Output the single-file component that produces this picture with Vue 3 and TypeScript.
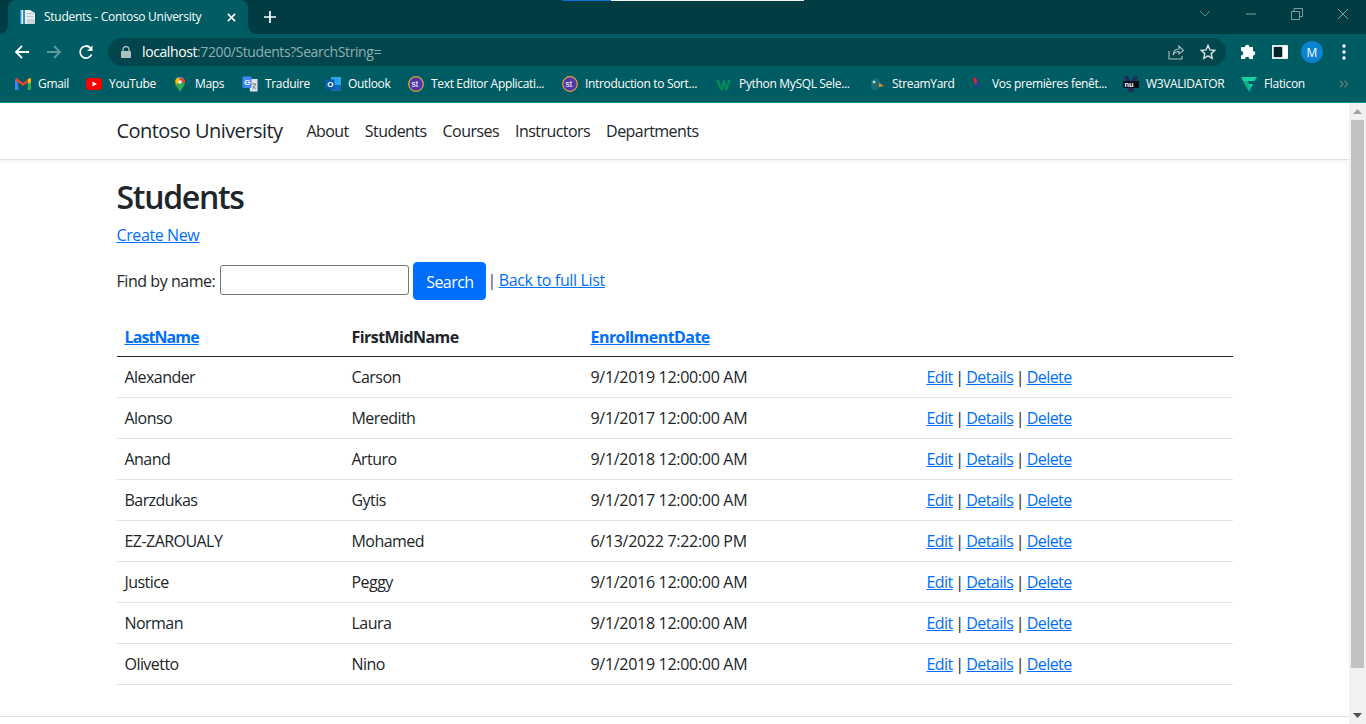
<script setup lang="ts">
interface Bookmark { label: string; icon: string; width: number }
interface Student { last: string; first: string; date: string }

const bookmarks: Bookmark[] = [
  { label: 'Gmail', icon: 'gmail', width: 71 },
  { label: 'YouTube', icon: 'youtube', width: 86 },
  { label: 'Maps', icon: 'maps', width: 70 },
  { label: 'Traduire', icon: 'translate', width: 83 },
  { label: 'Outlook', icon: 'outlook', width: 83 },
  { label: 'Text Editor Applicati...', icon: 'st', width: 154 },
  { label: 'Introduction to Sort...', icon: 'st', width: 154 },
  { label: 'Python MySQL Sele...', icon: 'w3', width: 153 },
  { label: 'StreamYard', icon: 'duck', width: 100 },
  { label: 'Vos premières fenêt...', icon: 'bird', width: 154 },
  { label: 'W3VALIDATOR', icon: 'nu', width: 118 },
  { label: 'Flaticon', icon: 'flaticon', width: 90 }
]

const navItems: string[] = ['About', 'Students', 'Courses', 'Instructors', 'Departments']

const students: Student[] = [
  { last: 'Alexander', first: 'Carson', date: '9/1/2019 12:00:00 AM' },
  { last: 'Alonso', first: 'Meredith', date: '9/1/2017 12:00:00 AM' },
  { last: 'Anand', first: 'Arturo', date: '9/1/2018 12:00:00 AM' },
  { last: 'Barzdukas', first: 'Gytis', date: '9/1/2017 12:00:00 AM' },
  { last: 'EZ-ZAROUALY', first: 'Mohamed', date: '6/13/2022 7:22:00 PM' },
  { last: 'Justice', first: 'Peggy', date: '9/1/2016 12:00:00 AM' },
  { last: 'Norman', first: 'Laura', date: '9/1/2018 12:00:00 AM' },
  { last: 'Olivetto', first: 'Nino', date: '9/1/2019 12:00:00 AM' }
]
</script>

<template>
  <div class="screen">
    <header class="chrome">
      <div class="progress"><span class="progress-blue"></span><span class="progress-white"></span></div>
      <div class="tabstrip">
        <div class="tab">
          <svg class="ico16" viewBox="0 0 16 16">
            <path d="M0 1h10l5 3v11H0z" fill="#e8eef2" />
            <rect x="0" y="1" width="5" height="14" fill="#2f8fd0" />
            <rect x="1.500" y="1" width="1.400" height="14" fill="#fff" />
            <rect x="6.500" y="4" width="7" height="1" fill="#b7c4cc" />
            <rect x="6.500" y="7" width="7" height="1" fill="#b7c4cc" />
            <rect x="7" y="10" width="8" height="5" fill="#c9d3da" />
          </svg>
          <span class="tab-title">Students - Contoso University</span>
          <svg class="tab-close" viewBox="0 0 10 10"><path d="M1 1l8 8M9 1l-8 8" stroke="#fff" stroke-width="1.700" /></svg>
        </div>
        <svg class="newtab" viewBox="0 0 12 12"><path d="M6 0v12M0 6h12" stroke="#fff" stroke-width="1.700" /></svg>
        <div class="winctl">
          <span class="winbtn"><svg width="12" height="8" viewBox="0 0 12 8"><path d="M1 1l5 5 5-5" fill="none" stroke="#5f8a8d" /></svg></span>
          <span class="winbtn"><svg width="12" height="2" viewBox="0 0 12 2"><path d="M1 1h10" stroke="#7a9ea0" /></svg></span>
          <span class="winbtn"><svg width="12" height="12" viewBox="0 0 12 12"><path d="M.5 3.500h8v8h-8zM3 3.500v-3h8.500v8h-3" fill="none" stroke="#7a9ea0" /></svg></span>
          <span class="winbtn"><svg width="12" height="12" viewBox="0 0 12 12"><path d="M1 1l10 10M11 1L1 11" stroke="#7a9ea0" /></svg></span>
        </div>
      </div>

      <div class="toolbar">
        <span class="tbtn"><svg class="ico16" viewBox="0 0 16 16"><path d="M15 8H2M8 2L2 8l6 6" fill="none" stroke="#fff" stroke-width="1.800" /></svg></span>
        <span class="tbtn"><svg class="ico16" viewBox="0 0 16 16"><path d="M1 8h13M8 2l6 6-6 6" fill="none" stroke="#5e9a9c" stroke-width="1.800" /></svg></span>
        <span class="tbtn"><svg class="ico16" viewBox="0 0 16 16"><path d="M13.600 10.500A6 6 0 1 1 12.400 3.800" fill="none" stroke="#fff" stroke-width="1.800" /><path d="M14.500 1.500v5.500H9z" fill="#fff" /></svg></span>
        <div class="omnibox">
          <svg class="lock" viewBox="0 0 10 12"><path d="M2 5V3.500a3 3 0 0 1 6 0V5" fill="none" stroke="#a9c0c1" stroke-width="1.300" /><rect y="5" width="10" height="7" rx="1" fill="#a9c0c1" /></svg>
          <span class="url"><span class="url-host">localhost</span>:7200/Students?SearchString=</span>
          <svg class="omni-ico" viewBox="0 0 16 16"><path d="M1 7v8h13v-3" fill="none" stroke="#a9c0c1" stroke-width="1.100" /><path d="M5 11c.5-4 3-6 6-6V2l4.500 4.500L11 10V7.500C8.500 7.500 6.500 8.500 5 11z" fill="none" stroke="#a9c0c1" stroke-width="1.100" /></svg>
          <svg class="omni-ico star" viewBox="0 0 16 16"><path d="M8 1.500l2 4.400 4.800.5-3.600 3.200 1 4.700L8 11.900l-4.200 2.400 1-4.700L1.200 6.400 6 5.900z" fill="none" stroke="#d3e0e0" stroke-width="1.500" /></svg>
        </div>
        <span class="tbtn tbtn-first"><svg class="ico16" viewBox="0 0 16 16"><path d="M1 4h4a2.200 2.200 0 1 1 4.400 0H13v4a2.200 2.200 0 1 1 0 4.400V16H9.400a2.200 2.200 0 1 0-4.400 0H1v-3.600a2.200 2.200 0 1 0 0-4.400z" fill="#fff" transform="translate(0 -1)" /></svg></span>
        <span class="tbtn"><svg class="ico16" viewBox="0 0 14 14"><path d="M0 1h14v12H0z" fill="#fff" /><rect x="1.500" y="2.500" width="7.500" height="9" fill="#00262a" /></svg></span>
        <span class="tbtn"><span class="avatar">M</span></span>
        <span class="tbtn"><svg width="4" height="16" viewBox="0 0 4 16"><circle cx="2" cy="2" r="1.700" fill="#fff" /><circle cx="2" cy="8" r="1.700" fill="#fff" /><circle cx="2" cy="14" r="1.700" fill="#fff" /></svg></span>
      </div>

      <div class="bookmarks">
        <div v-for="b in bookmarks" :key="b.label" class="bm" :style="{ width: b.width + 'px' }">
          <svg class="ico16" viewBox="0 0 16 16">
            <template v-if="b.icon === 'gmail'">
              <path d="M0 14V4l2.500-1.500L3.500 14z" fill="#4285f4" />
              <path d="M12.500 14l1-11.500L16 4v10z" fill="#34a853" />
              <path d="M0 4l1.500-2L8 7l6.500-5L16 4 8 10z" fill="#ea4335" />
              <path d="M13 3l3-1v4l-3 2z" fill="#fbbc04" />
            </template>
            <template v-else-if="b.icon === 'youtube'">
              <rect y="2" width="16" height="12" rx="3" fill="#f00" />
              <path d="M6.500 5.500v5L11 8z" fill="#fff" />
            </template>
            <template v-else-if="b.icon === 'maps'">
              <path d="M8 16C6 12 3 10 3 6a5 5 0 0 1 10 0c0 4-3 6-5 10z" fill="#34a853" />
              <path d="M3.500 4a5 5 0 0 1 3-2.800L9 4 5 8.500C3.500 7.500 3 5.500 3.500 4z" fill="#fbbc04" />
              <path d="M6.500 1.200a5 5 0 0 1 3.500 0L8 4.300z" fill="#4285f4" />
              <path d="M10 1.200A5 5 0 0 1 13 6L9.500 7.500 7 4.500z" fill="#ea4335" />
              <circle cx="8" cy="6" r="1.800" fill="#fff" />
            </template>
            <template v-else-if="b.icon === 'translate'">
              <path d="M7 3h8.500v12.500H8z" fill="#dfe3e6" />
              <rect x="0.500" y="0.500" width="9" height="11.500" rx="1" fill="#4285f4" />
              <text x="2.300" y="9" class="glyph">G</text>
              <path d="M10 8h4M12 7v1M10.500 13c2-1 2.500-3 3-5M11 10c.5 1.500 2 2.500 3 3" fill="none" stroke="#6b7479" stroke-width=".9" />
            </template>
            <template v-else-if="b.icon === 'outlook'">
              <rect x="6" y="1" width="10" height="14" fill="#28a8ea" />
              <path d="M6 9h10v6H6z" fill="#0f6cbd" />
              <rect y="3.500" width="9.500" height="9.500" rx="1" fill="#0a5ea8" />
              <text x="2.200" y="11" class="glyph">O</text>
            </template>
            <template v-else-if="b.icon === 'st'">
              <circle cx="8" cy="8" r="7.300" fill="#4f37a8" stroke="#e8a33d" stroke-width="1.200" />
              <text x="3.600" y="10.800" class="glyph st">st</text>
            </template>
            <template v-else-if="b.icon === 'w3'">
              <path d="M0 4h3.500l1.500 6 2-6h2l1.500 6 1.500-6h2.500l-3 10H9L8 9l-1.500 5H4z" fill="#04895f" />
            </template>
            <template v-else-if="b.icon === 'duck'">
              <path d="M3 14C1 9 2 2 7 2c3 0 4 3 4 5l4 3-5 1-2 3z" fill="#1f6a70" />
              <path d="M10 7l5 3-5 1z" fill="#e08d2c" />
              <circle cx="5" cy="6" r="1.500" fill="#9fe0d8" />
            </template>
            <template v-else-if="b.icon === 'bird'">
              <path d="M5 1c3 0 4 3 4 6l4 4-5-1-4 5 2-6C4 7 3 3 5 1z" fill="#1c3f8f" />
              <path d="M4 2c2-1.500 4 0 4 3L7 9C5 7 4 4 4 2z" fill="#d8242c" />
            </template>
            <template v-else-if="b.icon === 'nu'">
              <path d="M1 0h4l3 8 3-8h4l-5 16H6z" fill="#27285c" />
              <rect y="5" width="16" height="7" fill="#0b0e1c" />
              <text x="1.500" y="11" class="glyph nu">nu</text>
            </template>
            <template v-else>
              <path d="M0 1h16l-2.500 4H6.500L8 8h4l-2 4-2 3.500z" fill="#18d29c" />
              <path d="M3 5h3l3.500 7L8 15.500z" fill="#0fae80" />
            </template>
          </svg>
          <span class="bm-label">{{ b.label }}</span>
        </div>
        <svg class="bm-more" viewBox="0 0 10 8"><path d="M1 0.800L4 4 1 7.200M5.500 0.800L8.500 4 5.500 7.200" fill="none" stroke="#5a7578" stroke-width="1.500" /></svg>
      </div>
    </header>

    <div class="viewport">
      <div class="page">
        <nav class="navbar">
          <div class="container nav-inner">
            <a class="brand">Contoso University</a>
            <a v-for="item in navItems" :key="item" class="nav-link">{{ item }}</a>
          </div>
        </nav>

        <main class="container">
          <h1>Students</h1>
          <p><a class="link">Create New</a></p>
          <form class="search" @submit.prevent>
            <label>Find by name:</label>
            <input type="text" class="search-input" />
            <button class="btn" type="button">Search</button>
            <span class="sep">|</span>
            <a class="link back">Back to full List</a>
          </form>

          <table>
            <colgroup>
              <col class="c1" /><col class="c2" /><col class="c3" /><col class="c4" />
            </colgroup>
            <thead>
              <tr>
                <th><a class="link tight">LastName</a></th>
                <th>FirstMidName</th>
                <th><a class="link">EnrollmentDate</a></th>
                <th></th>
              </tr>
            </thead>
            <tbody>
              <tr v-for="s in students" :key="s.last">
                <td>{{ s.last }}</td>
                <td>{{ s.first }}</td>
                <td class="date">{{ s.date }}</td>
                <td class="actions"><a class="link">Edit</a> | <a class="link">Details</a> | <a class="link">Delete</a></td>
              </tr>
            </tbody>
          </table>
        </main>
        <footer class="footer"></footer>
      </div>

      <aside class="scrollbar">
        <svg class="arrow" viewBox="0 0 9 5"><path d="M0 5l4.500-5L9 5z" fill="#a3a3a3" /></svg>
        <div class="track"><div class="thumb"></div></div>
        <svg class="arrow" viewBox="0 0 9 5"><path d="M0 0l4.500 5L9 0z" fill="#505050" /></svg>
      </aside>
    </div>
  </div>
</template>

<style scoped>
.screen {
  width: 1366px;
  height: 724px;
  overflow: hidden;
  display: flex;
  flex-direction: column;
  font-family: "Open Sans", "Noto Sans", "Liberation Sans", sans-serif;
  color: #212529;
  background: #fff;
}
.chrome { position: relative; flex: none; height: 103px; background: #005c63; color: #fff; border-bottom: 1px solid #009090; box-sizing: border-box; }
.progress { position: absolute; top: 0; left: 563px; display: flex; height: 1px; }
.progress-blue { width: 48px; background: #0a6fd8; }
.progress-white { width: 193px; background: #f2f2f2; }
.tabstrip { display: flex; align-items: flex-start; height: 34px; background: #013c42; }
.tab {
  position: relative;
  margin-left: 8px;
  width: 240px;
  height: 34px;
  box-sizing: border-box;
  padding: 0 12px;
  display: flex;
  align-items: center;
  gap: 8px;
  background: #005c63;
  border-radius: 8px 8px 0 0;
}
.tab::before, .tab::after { content: ""; position: absolute; bottom: 0; width: 8px; height: 8px; background: radial-gradient(circle at var(--cx) 0, #013c42 7.5px, #005c63 8px); }
.tab::before { left: -8px; --cx: 0; }
.tab::after { right: -8px; --cx: 100%; }
.ico16 { width: 16px; height: 16px; flex: none; display: block; }
.tab-title { flex: 1; font-size: 12px; letter-spacing: -0.28px; white-space: nowrap; margin-top: -2px; }
.tab-close { width: 9px; height: 9px; margin-right: 0; }
.newtab { width: 12px; height: 12px; margin: 11px 0 0 16px; }
.winctl { margin-left: auto; display: flex; }
.winbtn { width: 46px; height: 28px; display: flex; align-items: center; justify-content: center; }
.toolbar { display: flex; align-items: flex-end; height: 32px; padding: 0 6px; }
.tbtn { width: 32px; height: 28px; flex: none; display: flex; align-items: center; justify-content: center; }
.tbtn-first { margin-left: 6px; }
.omnibox { flex: 1; margin-left: 6px; height: 28px; border-radius: 14px; background: #00464c; display: flex; align-items: center; padding: 0 10px 0 13px; }
.lock { width: 10px; height: 12px; flex: none; }
.url { margin: -2px 0 0 11px; flex: 1; font-size: 14px; letter-spacing: -0.4px; color: #8fb0b2; white-space: nowrap; }
.url-host { color: #fff; }
.omni-ico { width: 16px; height: 16px; flex: none; margin-left: 16px; }
.avatar { width: 22px; height: 22px; border-radius: 50%; background: #0c82d0; display: flex; align-items: center; justify-content: center; font-size: 12px; }
.bookmarks { display: flex; align-items: center; height: 36px; padding-left: 7px; position: relative; }
.bm { display: flex; align-items: center; gap: 7px; padding-left: 8px; box-sizing: border-box; flex: none; }
.bm-label { font-size: 12px; letter-spacing: -0.33px; white-space: nowrap; margin-top: -2px; }
.bm-more { position: absolute; left: 1339px; top: 14px; width: 10px; height: 8px; }
.glyph { font-size: 8px; font-weight: 700; fill: #fff; font-family: "Liberation Sans", sans-serif; }
.glyph.st { font-size: 8.500px; font-weight: 400; }
.glyph.nu { font-size: 7.500px; }
.viewport { flex: 1; min-height: 0; display: flex; }
.page { flex: 1; min-width: 0; display: flex; flex-direction: column; }
.navbar { height: 57px; box-sizing: border-box; border-bottom: 1px solid #dee2e6; box-shadow: 0 2px 4px rgba(0,0,0,.05); margin-bottom: 15px; flex: none; }
.container { width: 1116px; margin: 0 auto; }
.nav-inner { display: flex; align-items: center; height: 100%; }
.brand { font-size: 20px; line-height: 30px; letter-spacing: -0.55px; margin-right: 16px; color: #212529; white-space: nowrap; }
.nav-link { font-size: 16px; line-height: 24px; padding: 0 8px; letter-spacing: -0.55px; color: #212529; }
h1 { margin: 0 0 7px; padding-top: 3px; font-size: 32px; line-height: 38.4px; font-weight: 600; letter-spacing: -1.3px; }
p { margin: 0 0 15px; font-size: 16px; line-height: 24px; letter-spacing: -0.4px; }
.link { color: #006efd; text-decoration: underline; }
.search { display: flex; align-items: center; height: 38px; margin-bottom: 15px; font-size: 16px; letter-spacing: -0.45px; }
.search-input { width: 189px; height: 30px; box-sizing: border-box; border: 1px solid #767676; border-radius: 3px; margin: -2px 4px 0 5px; padding: 0; background: #fff; }
.btn { width: 73px; height: 38px; border: 1px solid #006efd; border-radius: 4px; background: #006efd; color: #fff; font: inherit; letter-spacing: -0.55px; padding: 2px 0 0; }
.sep { margin: -2px 3px 0 1px; color: #6f1d6f; }
.back { letter-spacing: -0.35px; margin-top: -2px; }
table { width: 1116px; border-collapse: collapse; table-layout: fixed; font-size: 16px; letter-spacing: -0.55px; }
.c1 { width: 227px; } .c2 { width: 239px; } .c3 { width: 336px; } .c4 { width: 314px; }
th { text-align: left; font-weight: 700; height: 41px; box-sizing: border-box; padding: 9px 8px 7px; line-height: 24px; border-bottom: 1px solid #212529; }
.tight { letter-spacing: -0.9px; }
td { height: 41px; box-sizing: border-box; padding: 8px; line-height: 24px; border-bottom: 1px solid #dee2e6; white-space: nowrap; }
.date { letter-spacing: -0.3px; }
.actions { word-spacing: -1px; }
.footer { margin-top: 31px; border-top: 1px solid #dee2e6; height: 8px; flex: none; }
.scrollbar { width: 17px; flex: none; background: #f1f1f1; display: flex; flex-direction: column; align-items: center; }
.arrow { width: 9px; height: 5px; flex: none; margin: 6px 0; }
.track { flex: 1; width: 100%; padding: 0 2px; box-sizing: border-box; }
.thumb { height: 548px; background: #c1c1c1; }
</style>
